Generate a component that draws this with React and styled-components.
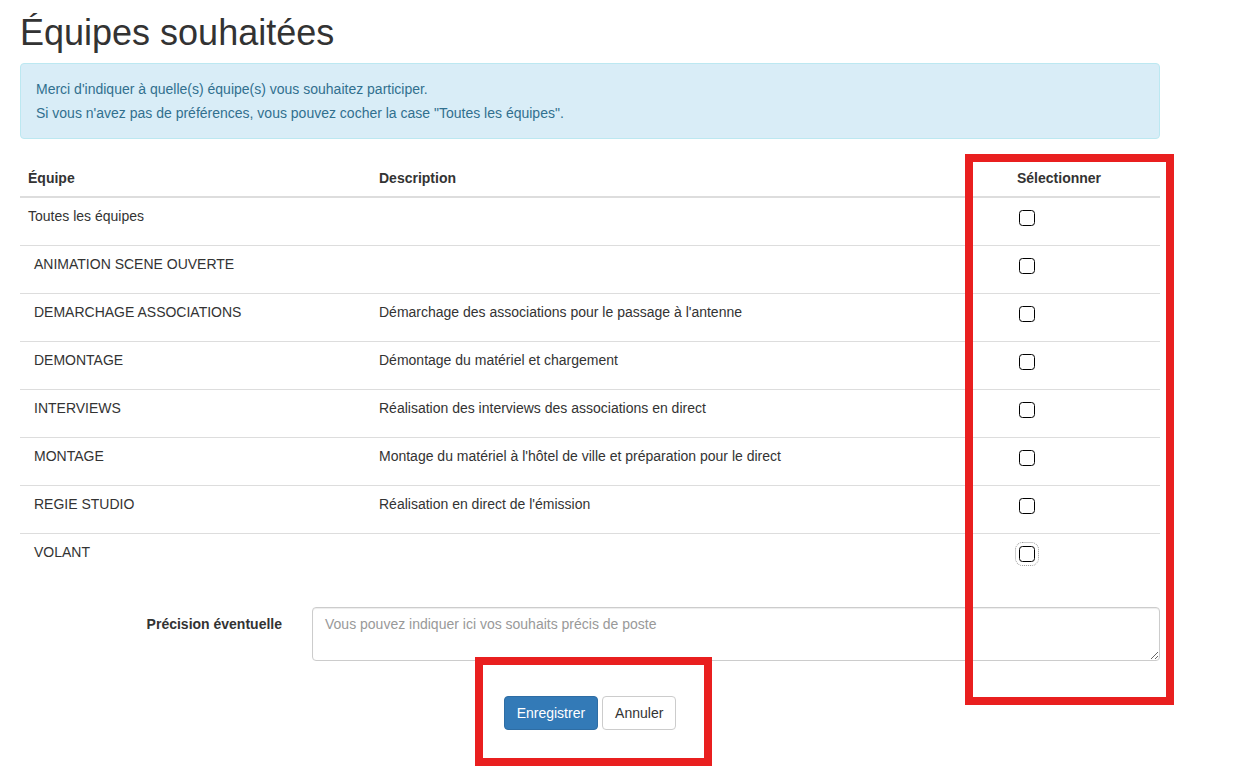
import React from "react";
import styled, { createGlobalStyle } from "styled-components";

const GlobalStyle = createGlobalStyle`
  html, body { margin: 0; padding: 0; background: #fff; }
  body {
    font-family: "Liberation Sans", Arial, Helvetica, sans-serif;
    font-size: 14px;
    line-height: 20px;
    color: #333;
  }
  * { box-sizing: border-box; }
`;

const Page = styled.div`
  position: relative;
  width: 1240px;
  min-height: 774px;
`;

const Container = styled.div`
  width: 1140px;
  margin-left: 20px;
  padding-bottom: 40px;
  overflow: hidden;
`;

const Title = styled.h1`
  font-size: 36px;
  font-weight: 500;
  line-height: 1.1;
  color: #333;
  margin: 13px 0 10px;
`;

const Alert = styled.div`
  background: #d9edf7;
  border: 1px solid #bce8f1;
  border-radius: 4px;
  color: #31708f;
  padding: 13px 15px;
  line-height: 24px;
  margin-bottom: 21px;
`;

const AlertLine = styled.p`
  margin: 0;
`;

const Table = styled.table`
  width: 100%;
  border-collapse: separate;
  border-spacing: 0;
  margin-bottom: 26px;
`;

const Th = styled.th`
  text-align: left;
  font-weight: bold;
  padding: 8px;
  line-height: 20px;
  vertical-align: bottom;
  border-bottom: 2px solid #ddd;
  width: ${(p) => p.$w}px;
`;

const Tr = styled.tr`
  &:first-child td { border-top: none; }
`;

const Td = styled.td`
  padding: 8px;
  padding-left: ${(p) => (p.$indent ? 14 : 8)}px;
  line-height: 20px;
  vertical-align: top;
  border-top: 1px solid #ddd;
`;

const Check = styled.input.attrs({ type: "checkbox" })`
  appearance: none;
  -webkit-appearance: none;
  display: block;
  width: 16px;
  height: 16px;
  margin: 4px 0 11px 2px;
  border: 1.5px solid #000;
  border-radius: 3.5px;
  background: #fff;
  outline: ${(p) => (p.$focused ? "1px dotted #999" : "none")};
  outline-offset: 3px;
`;

const FormRow = styled.div`
  display: grid;
  grid-template-columns: 262px 1fr;
  column-gap: 30px;
`;

const Label = styled.label`
  text-align: right;
  font-weight: bold;
  padding-top: 7px;
`;

const TextArea = styled.textarea`
  display: block;
  width: 100%;
  height: 54px;
  padding: 6px 12px;
  font-family: inherit;
  font-size: 14px;
  line-height: 20px;
  color: #555;
  border: 1px solid #ccc;
  border-radius: 4px;
  box-shadow: inset 0 1px 1px rgba(0, 0, 0, 0.075);
  resize: vertical;
  &::placeholder { color: #999; }
`;

const Actions = styled.div`
  display: flex;
  justify-content: center;
  gap: 4px;
  margin-top: 35px;
`;

const Button = styled.button`
  font-family: inherit;
  font-size: 14px;
  line-height: 20px;
  padding: 6px 12px;
  border-radius: 4px;
  border: 1px solid ${(p) => (p.$primary ? "#2e6da4" : "#ccc")};
  background: ${(p) => (p.$primary ? "#337ab7" : "#fff")};
  color: ${(p) => (p.$primary ? "#fff" : "#333")};
  cursor: pointer;
`;

const Highlight = styled.div`
  position: absolute;
  border: 8px solid #e91f1f;
  pointer-events: none;
`;

const teams = [
  { name: "Toutes les équipes", desc: "", indent: false },
  { name: "ANIMATION SCENE OUVERTE", desc: "", indent: true },
  { name: "DEMARCHAGE ASSOCIATIONS", desc: "Démarchage des associations pour le passage à l'antenne", indent: true },
  { name: "DEMONTAGE", desc: "Démontage du matériel et chargement", indent: true },
  { name: "INTERVIEWS", desc: "Réalisation des interviews des associations en direct", indent: true },
  { name: "MONTAGE", desc: "Montage du matériel à l'hôtel de ville et préparation pour le direct", indent: true },
  { name: "REGIE STUDIO", desc: "Réalisation en direct de l'émission", indent: true },
  { name: "VOLANT", desc: "", indent: true },
];

export default function App() {
  return (
    <Page>
      <GlobalStyle />
      <Container>
        <Title>Équipes souhaitées</Title>
        <Alert>
          <AlertLine>Merci d'indiquer à quelle(s) équipe(s) vous souhaitez participer.</AlertLine>
          <AlertLine>Si vous n'avez pas de préférences, vous pouvez cocher la case "Toutes les équipes".</AlertLine>
        </Alert>
        <Table>
          <thead>
            <tr>
              <Th $w={351}>Équipe</Th>
              <Th $w={638}>Description</Th>
              <Th $w={151}>Sélectionner</Th>
            </tr>
          </thead>
          <tbody>
            {teams.map((t, i) => (
              <Tr key={t.name}>
                <Td $indent={t.indent}>{t.name}</Td>
                <Td>{t.desc}</Td>
                <Td>
                  <Check $focused={i === teams.length - 1} readOnly />
                </Td>
              </Tr>
            ))}
          </tbody>
        </Table>
        <FormRow>
          <Label>Précision éventuelle</Label>
          <TextArea placeholder="Vous pouvez indiquer ici vos souhaits précis de poste" />
        </FormRow>
        <Actions>
          <Button $primary>Enregistrer</Button>
          <Button>Annuler</Button>
        </Actions>
      </Container>
      <Highlight style={{ left: 965, top: 154, width: 209, height: 551 }} />
      <Highlight style={{ left: 475, top: 657, width: 237, height: 109 }} />
    </Page>
  );
}
